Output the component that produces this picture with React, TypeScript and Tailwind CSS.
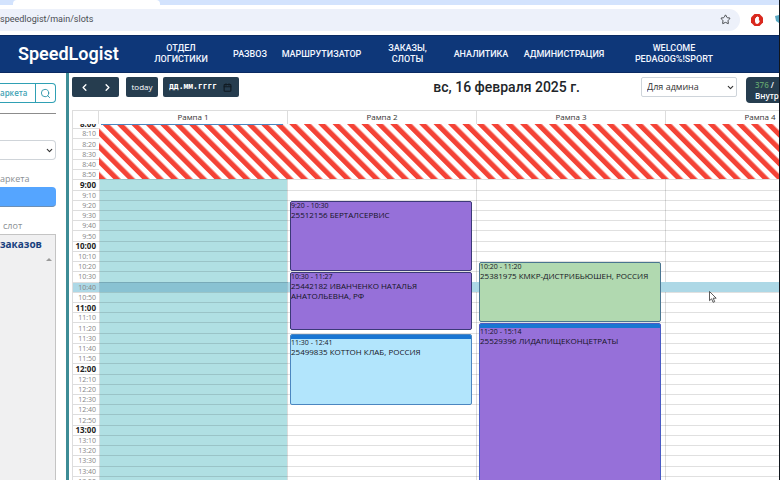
import React from "react";
import { ChevronDown, ChevronLeft, ChevronRight, Search, Star, Calendar } from "lucide-react";

const START = 8 * 60;
const END = 14 * 60;
const NOW_SLOT = 16;
const slots = Array.from({ length: 36 }, (_, i) => START + i * 10);
const ramps = ["Рампа 1", "Рампа 2", "Рампа 3", "Рампа 4"];

type SlotEvent = {
  ramp: number;
  from: number;
  to: number;
  time: string;
  title: string;
  look: string;
  band?: boolean;
};

const events: SlotEvent[] = [
  { ramp: 2, from: 560, to: 630, time: "9:20 - 10:30", title: "25512156 БЕРТАЛСЕРВИС", look: "bg-[#9670d9] border-[#3c3a78]" },
  { ramp: 2, from: 630, to: 687, time: "10:30 - 11:27", title: "25442182 ИВАНЧЕНКО НАТАЛЬЯ АНАТОЛЬЕВНА, РФ", look: "bg-[#9670d9] border-[#3c3a78]" },
  { ramp: 2, from: 690, to: 761, time: "11:30 - 12:41", title: "25499835 КОТТОН КЛАБ, РОССИЯ", look: "bg-[#b2e5fc] border-[#4b86c0]", band: true },
  { ramp: 3, from: 620, to: 680, time: "10:20 - 11:20", title: "25381975 КМКР-ДИСТРИБЬЮШЕН, РОССИЯ", look: "bg-[#b1d9b0] border-[#4a7590]" },
  { ramp: 3, from: 680, to: 914, time: "11:20 - 15:14", title: "25529396 ЛИДАПИЩЕКОНЦЕТРАТЫ", look: "bg-[#9670d9] border-[#4a5cc4]", band: true },
];

const columns = "grid grid-cols-[26px_repeat(4,minmax(189px,1fr))]";

function BrowserBar() {
  return (
    <div className="bg-white">
      <div className="flex h-[5px] bg-[#d3e3fd]">
        <div className="ml-[13px] w-[147px] rounded-t-sm bg-white" />
      </div>
      <div className="flex h-[30px] items-center pb-px">
        <div className="flex h-[22px] flex-1 items-center justify-between rounded-r-full bg-[#edf1fa] pr-[9px]">
          <span className="font-['Roboto',sans-serif] text-[9px] text-[#4a4d52]">speedlogist/main/slots</span>
          <Star size={11} className="text-[#3c4043]" />
        </div>
        <svg className="ml-[11px] size-3" viewBox="0 0 12 12">
          <path d="M3.5 0h5L12 3.500v5L8.500 12h-5L0 8.500v-5Z" fill="#d9281e" />
          <path d="M4 4.200V7.500Q4.300 10 6.300 10 8 10 9 6.800L7.900 6.500V3H7V2.400H6V3H5V4.200Z" fill="white" />
        </svg>
        <svg className="ml-[12px] h-[9px] w-[4px]" viewBox="0 0 4 9">
          <path d="M0 1 4 0V8L1 6Z" fill="#5aa9c4" />
        </svg>
      </div>
    </div>
  );
}

function NavBar() {
  const link = "px-[7px] text-center";
  return (
    <header className="flex h-[38px] items-center border-y border-[#0a2a62] bg-[#0e3779] font-['Roboto',sans-serif] text-white">
      <a href="#home" className="w-[136px] shrink-0 pb-[2px] pl-[18px] text-[18px] font-semibold">SpeedLogist</a>
      <nav className="flex items-center text-[9px] leading-[11px] font-medium text-[#f2f6ff]">
        <a href="#logistics" className={`${link} w-[90px]`}>ОТДЕЛ<br />ЛОГИСТИКИ</a>
        <a href="#delivery" className={`${link} w-[48px]`}>РАЗВОЗ</a>
        <a href="#router" className={`${link} w-[95px]`}>МАРШРУТИЗАТОР</a>
        <a href="#orders" className={`${link} w-[77px]`}>ЗАКАЗЫ,<br />СЛОТЫ</a>
        <a href="#analytics" className={`${link} w-[70px]`}>АНАЛИТИКА</a>
        <a href="#admin" className={`${link} w-[96px]`}>АДМИНИСТРАЦИЯ</a>
        <a href="#profile" className={`${link} w-[124px]`}>WELCOME<br />PEDAGOG%!SPORT</a>
      </nav>
    </header>
  );
}

function Sidebar() {
  return (
    <aside className="flex w-[69px] shrink-0 flex-col overflow-hidden border-r-[3px] border-[#3d8c96] pt-[10px] pr-[10px] font-['Open_Sans',sans-serif] text-[9px]">
      <div className="flex h-5 rounded-r-sm border border-l-0 border-[#2fa0b4]">
        <input aria-label="Код маркета" defaultValue="аркета" className="w-[35px] min-w-0 text-[8px] font-semibold text-[#3fa3b5] outline-none" />
        <button aria-label="Найти" className="flex flex-1 items-center justify-center border-l border-[#2fa0b4] text-[#2b95aa]">
          <Search size={11} />
        </button>
      </div>
      <div className="mt-[10px] h-px shrink-0 bg-[#8c8c8c]" />
      <div className="relative mt-[26px] h-5">
        <select aria-label="Склад" className="block h-full w-full appearance-none rounded-r-sm border border-l-0 border-[#cfd4d9] bg-white" />
        <ChevronDown size={9} strokeWidth={3} className="pointer-events-none absolute top-[6px] right-[2px] text-[#333]" />
      </div>
      <label htmlFor="market" className="mt-[11px] h-[16px] leading-[16px] text-[#8a8f94]">аркета</label>
      <button id="market" aria-label="Выбрать" className="h-5 rounded-r-sm border-b border-[#6c8fb5] bg-[#55a5ff]" />
      <div className="mt-[11px] h-4 pl-[3px] leading-[16px] text-[#8a8f94]">слот</div>
      <section className="flex flex-1 flex-col border-t border-r border-[#c4c4c4] bg-[#f0f0f1]">
        <h2 className="text-[10px] leading-[18px] font-bold text-[#17407e]">заказов</h2>
        <div className="mt-[5px] mr-[3px] size-0 self-end border-x-[3px] border-b-[3px] border-x-transparent border-b-[#9a9a9a]" />
      </section>
    </aside>
  );
}

function Toolbar() {
  const dark = "h-5 bg-[#263d4f] text-white";
  return (
    <div className="flex h-[37px] items-start pt-[4px]">
      <div className="flex">
        <button aria-label="Назад" className={`${dark} flex w-6 items-center justify-center rounded-l-[2px]`}>
          <ChevronLeft size={11} strokeWidth={3} />
        </button>
        <button aria-label="Вперёд" className={`${dark} flex w-[23px] items-center justify-center rounded-r-[2px]`}>
          <ChevronRight size={11} strokeWidth={3} />
        </button>
      </div>
      <button className={`${dark} ml-[7px] w-8 rounded-[2px] font-['Open_Sans',sans-serif] text-[8px]`}>today</button>
      <div className={`${dark} ml-[5px] flex w-[76px] items-center rounded-[2px] pl-[6px]`}>
        <input aria-label="Дата" defaultValue="дд.мм.гггг" className="w-[54px] min-w-0 font-['DejaVu_Sans_Mono',monospace] text-[8px] font-bold outline-none" />
        <Calendar size={9} strokeWidth={3} className="text-[#101a22]" />
      </div>
      <h1 className="ml-auto font-['Roboto',sans-serif] text-[14px] leading-5 font-medium text-[#212529]">вс, 16 февраля 2025 г.</h1>
      <div className="relative ml-[61px] h-5 w-[96px]">
        <select aria-label="Режим" className="block h-full w-full appearance-none rounded-[2px] border border-[#ced4da] bg-white pl-[5px] font-['Open_Sans',sans-serif] text-[9px] text-[#333]">
          <option>Для админа</option>
        </select>
        <ChevronDown size={9} strokeWidth={3} className="pointer-events-none absolute top-[6px] right-[2px] text-[#333]" />
      </div>
      <div className="ml-[9px] h-[26px] w-[33px] overflow-hidden rounded-l-sm bg-[#263d4f] pt-[2px] pl-[9px] font-['Open_Sans',sans-serif] text-[8px] leading-[11px] font-semibold whitespace-nowrap text-white">
        <div><span className="text-[#5f9d6c]">376</span> /</div>
        <div>Внутр</div>
      </div>
    </div>
  );
}

function ClosedHours() {
  return (
    <svg className="h-[61px] w-full" style={{ gridColumn: "2 / 6", gridRow: "1 / 61" }} aria-hidden="true">
      <defs>
        <pattern id="closed" width="10.2" height="10.2" patternUnits="userSpaceOnUse" patternTransform="translate(0 61) rotate(-45)">
          <rect width="10.2" height="10.2" fill="#ffffff" />
          <rect width="5.1" height="10.2" fill="#f44336" />
        </pattern>
      </defs>
      <rect width="100%" height="61" fill="url(#closed)" />
    </svg>
  );
}

function Timetable() {
  return (
    <div className="flex flex-1 flex-col overflow-hidden font-['Open_Sans',sans-serif] text-[#333]">
      <div className={`${columns} h-[14px] shrink-0 border-t border-l border-[#dddddd] text-[8px] leading-[12px]`}>
        <div className="border-r border-[#dddddd]" />
        {ramps.map((ramp) => (
          <div key={ramp} className="border-r border-[#dddddd] text-center">{ramp}</div>
        ))}
      </div>
      <div className="h-0 flex-1 overflow-hidden">
        <div className={`${columns} -mt-[6px] h-[368px] grid-rows-[repeat(360,minmax(0,1fr))] border-l border-[#dddddd]`}>
          {ramps.map((ramp, i) => (
            <div
              key={ramp}
              className={i === 0 ? "border-x border-[#dddddd] bg-[#b0e0e3]" : "border-r border-[#dddddd]"}
              style={{ gridColumn: i + 2, gridRow: "1 / 361" }}
            />
          ))}
          {slots.map((minute, i) => {
            const hour = minute % 60 === 0;
            const row = `${i * 10 + 1} / span 10`;
            const label = `${Math.floor(minute / 60)}:${String(minute % 60).padStart(2, "0")}`;
            const now = i === NOW_SLOT;
            return (
              <React.Fragment key={minute}>
                <div
                  className={`flex items-center justify-end border-t border-[#dddddd] pr-[3px] leading-none ${hour ? "text-[8px] font-bold text-[#222]" : "text-[7px] text-[#858585]"} ${now ? "bg-[#add8e6]" : ""}`}
                  style={{ gridColumn: 1, gridRow: row }}
                >
                  {label}
                </div>
                <div
                  className={`border-t border-black/12 ${now ? "bg-[#69a9c4]/55" : ""}`}
                  style={{ gridColumn: 2, gridRow: row }}
                />
                <div
                  className={`border-t ${now ? "border-[#add8e6] bg-[#add8e6]" : "border-black/12"}`}
                  style={{ gridColumn: "3 / 6", gridRow: row }}
                />
              </React.Fragment>
            );
          })}
          <ClosedHours />
          <div className="mr-[5px] ml-[2px] border-b border-[#4b86c0]" style={{ gridColumn: 2, gridRow: "1 / 8" }} />
          {events.map((event) => (
            <article
              key={event.title}
              className={`mt-px mr-[5px] ml-[2px] overflow-hidden rounded-[2px] border text-[#15151f] ${event.look}`}
              style={{
                gridColumn: event.ramp + 1,
                gridRow: `${event.from - START + 1} / ${Math.min(event.to, END) - START + 1}`,
              }}
            >
              {event.band && <div className="h-[4px] bg-[#1976d2]" />}
              <div className="text-[7px] leading-[8px]">{event.time}</div>
              <div className="pr-1 text-[8px] leading-[10px]">{event.title}</div>
            </article>
          ))}
        </div>
      </div>
    </div>
  );
}

export default function App() {
  return (
    <div className="relative flex h-screen flex-col overflow-hidden border-r border-[#10151c] bg-white">
      <BrowserBar />
      <NavBar />
      <div className="flex min-h-0 flex-1">
        <Sidebar />
        <main className="flex min-w-0 flex-1 flex-col pl-[3px]">
          <Toolbar />
          <Timetable />
        </main>
      </div>
      <svg className="absolute top-[291px] left-[709px] h-3 w-2" viewBox="0 0 8 12">
        <path d="M.5.5v9.2l2.1-1.9 1.5 3.5 1.6-.7-1.5-3.4h3Z" fill="white" stroke="#333" strokeWidth=".8" />
      </svg>
    </div>
  );
}
